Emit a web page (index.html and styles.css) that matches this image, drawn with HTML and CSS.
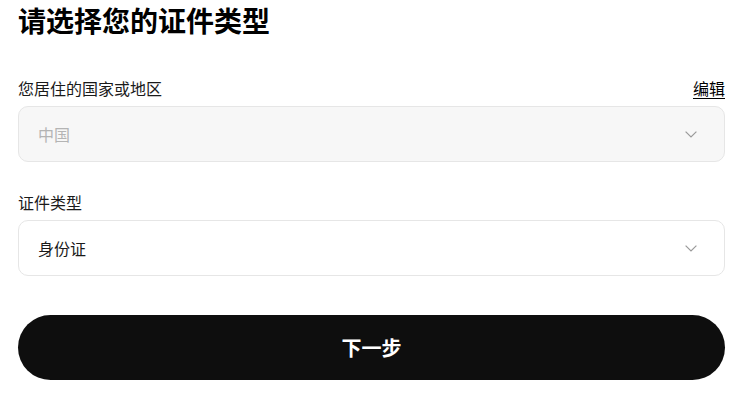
FILE: index.html
```html
<!DOCTYPE html>
<html lang="zh-CN">
<head>
<meta charset="utf-8">
<link rel="stylesheet" href="styles.css">
</head>
<body>
<main class="page">
  <h1 class="title">请选择您的证件类型</h1>
  <div class="field field-first">
    <div class="label-row">
      <span class="label">您居住的国家或地区</span>
      <a class="edit" href="#">编辑</a>
    </div>
    <div class="select select-disabled">
      <span class="value value-muted">中国</span>
      <svg class="chevron" width="12" height="7" viewBox="0 0 12 7"><path d="M0.6 0.6 L6 6 L11.4 0.6" fill="none" stroke="#9a9a9a" stroke-width="1.2"/></svg>
    </div>
  </div>
  <div class="field">
    <div class="label-row">
      <span class="label">证件类型</span>
    </div>
    <div class="select">
      <span class="value">身份证</span>
      <svg class="chevron" width="12" height="7" viewBox="0 0 12 7"><path d="M0.6 0.6 L6 6 L11.4 0.6" fill="none" stroke="#9a9a9a" stroke-width="1.2"/></svg>
    </div>
  </div>
  <button class="next" type="button">下一步</button>
</main>
</body>
</html>
```
FILE: styles.css
```css
html, body {
  margin: 0;
  padding: 0;
  background: #ffffff;
}
body {
  font-family: "Noto Sans CJK SC", "Noto Sans", sans-serif;
  color: #1a1a1a;
}
.page {
  padding: 0 8px 0 18px;
  display: flex;
  flex-direction: column;
}
.title {
  margin: 0;
  font-size: 28px;
  line-height: 40px;
  font-weight: 700;
  color: #000;
}
.field {
  margin-top: 28px;
  display: flex;
  flex-direction: column;
  gap: 6px;
}
.field-first {
  margin-top: 36px;
}
.label-row {
  display: flex;
  justify-content: space-between;
  align-items: center;
}
.label {
  font-size: 16px;
  line-height: 24px;
  color: #1a1a1a;
}
.edit {
  font-size: 16px;
  line-height: 24px;
  color: #000;
  text-decoration: underline;
  text-underline-offset: 3px;
}
.select {
  box-sizing: border-box;
  height: 56px;
  border: 1px solid #e6e6e6;
  border-radius: 10px;
  background: #fff;
  display: flex;
  align-items: center;
  justify-content: space-between;
  padding: 0 27px 0 19px;
}
.select-disabled {
  background: #f7f7f7;
}
.value {
  font-size: 16px;
  line-height: 24px;
  color: #1a1a1a;
}
.value-muted {
  color: #b4b4b4;
}
.chevron {
  display: block;
}
.next {
  margin-top: 39px;
  height: 65px;
  border: none;
  border-radius: 33px;
  background: #0e0e0e;
  color: #fff;
  font-family: "Noto Sans CJK SC", "Noto Sans", sans-serif;
  font-size: 20px;
  font-weight: 700;
  cursor: pointer;
}
```
